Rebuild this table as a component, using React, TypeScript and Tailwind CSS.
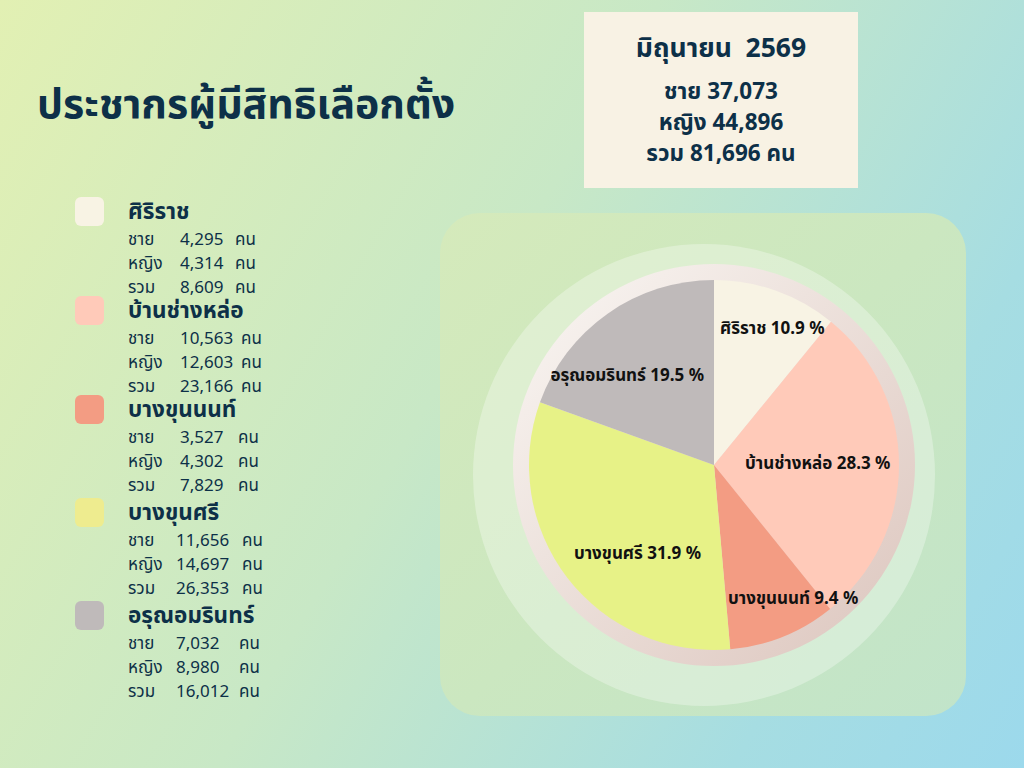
const districts = [
  {
    name: "ศิริราช",
    color: "#f8f3e4",
    pct: 10.9,
    rows: [
      ["ชาย", "4,295"],
      ["หญิง", "4,314"],
      ["รวม", "8,609"],
    ],
    gap: "mt-0",
    num: "w-[55px]",
    lead: "w-[52px]",
  },
  {
    name: "บ้านช่างหล่อ",
    color: "#ffcab9",
    pct: 28.3,
    rows: [
      ["ชาย", "10,563"],
      ["หญิง", "12,603"],
      ["รวม", "23,166"],
    ],
    gap: "mt-0",
    num: "w-[61px]",
    lead: "w-[52px]",
  },
  {
    name: "บางขุนนนท์",
    color: "#f39c83",
    pct: 9.4,
    rows: [
      ["ชาย", "3,527"],
      ["หญิง", "4,302"],
      ["รวม", "7,829"],
    ],
    gap: "mt-0",
    num: "w-[58px]",
    lead: "w-[52px]",
  },
  {
    name: "บางขุนศรี",
    color: "#eeec8f",
    pct: 31.9,
    rows: [
      ["ชาย", "11,656"],
      ["หญิง", "14,697"],
      ["รวม", "26,353"],
    ],
    gap: "mt-1",
    num: "w-[66px]",
    lead: "w-[48px]",
  },
  {
    name: "อรุณอมรินทร์",
    color: "#bfbaba",
    pct: 19.5,
    rows: [
      ["ชาย", "7,032"],
      ["หญิง", "8,980"],
      ["รวม", "16,012"],
    ],
    gap: "mt-1",
    num: "w-[63px]",
    lead: "w-[48px]",
  },
]

const pieColors = ["#f8f3e4", "#ffcab9", "#f39c83", "#e7f287", "#bfbaba"]

function Pie() {
  const cx = 274
  const cy = 252
  const r = 185
  let start = 0
  const slices = districts.map((d, i) => {
    const a0 = (start / 100) * Math.PI * 2
    start += d.pct
    const a1 = (start / 100) * Math.PI * 2
    const x0 = cx + r * Math.sin(a0)
    const y0 = cy - r * Math.cos(a0)
    const x1 = cx + r * Math.sin(a1)
    const y1 = cy - r * Math.cos(a1)
    const large = a1 - a0 > Math.PI ? 1 : 0
    return (
      <path
        key={d.name}
        d={`M${cx} ${cy} L${x0} ${y0} A${r} ${r} 0 ${large} 1 ${x1} ${y1} Z`}
        fill={pieColors[i]}
      />
    )
  })

  return (
    <svg width="526" height="503" viewBox="0 0 526 503" className="block">
      <defs>
        <linearGradient id="ring" x1="0" y1="0" x2="1" y2="1">
          <stop offset="0" stopColor="#faf7f4" />
          <stop offset="1" stopColor="#dcc5bd" />
        </linearGradient>
      </defs>
      <circle cx="264" cy="262" r="231" fill="#ffffff" fillOpacity="0.3" />
      <circle cx={cx} cy={cy} r="201" fill="url(#ring)" />
      {slices}
      <g
        fontFamily="'Noto Sans', 'Noto Sans Thai', sans-serif"
        fontWeight="700"
        fontSize="17"
        fill="#111111"
        dominantBaseline="central"
      >
        <text x="280" y="114">ศิริราช 10.9 %</text>
        <text x="305" y="249">บ้านช่างหล่อ 28.3 %</text>
        <text x="288" y="384">บางขุนนนท์ 9.4 %</text>
        <text x="261" y="339" textAnchor="end">บางขุนศรี 31.9 %</text>
        <text x="264" y="161" textAnchor="end">อรุณอมรินทร์ 19.5 %</text>
      </g>
    </svg>
  )
}

export default function App() {
  return (
    <div className="flex h-[768px] w-[1024px] overflow-hidden bg-[linear-gradient(120deg,#e2f0b3_0%,#c8e8c6_45%,#a6dde2_80%,#9cd9ec_100%)] font-['Noto_Sans','Noto_Sans_Thai',sans-serif] text-[#0d3048]">
      <div className="flex w-[440px] flex-col">
        <h1 className="mt-[76px] pl-[37px] text-[41px] leading-[52px] font-bold whitespace-nowrap">
          ประชากรผู้มีสิทธิเลือกตั้ง
        </h1>
        <div className="mt-[72px] flex flex-col pl-[75px]">
          {districts.map((d) => (
            <div key={d.name} className={d.gap}>
              <div className="flex h-[22px] items-center">
                <div
                  className="h-[29px] w-[29px] shrink-0 rounded-[6px]"
                  style={{ backgroundColor: d.color }}
                />
                <div className="ml-6 text-[22.5px] leading-[22px] font-bold">
                  {d.name}
                </div>
              </div>
              <div className="pt-[5px] pl-[53px] text-[17px] leading-6">
                {d.rows.map(([label, value]) => (
                  <div key={label} className="flex">
                    <span className={d.lead}>{label}</span>
                    <span className={d.num}>{value}</span>
                    <span>คน</span>
                  </div>
                ))}
              </div>
            </div>
          ))}
        </div>
      </div>

      <div className="flex flex-col">
        <div className="mt-3 ml-[144px] flex h-[176px] w-[274px] flex-col items-center bg-[#f8f2e4] pt-[16px] font-bold">
          <div className="text-[26.5px] leading-[38px]">
            มิถุนายน&nbsp;&nbsp;2569
          </div>
          <div className="mt-[9px] flex flex-col items-center text-[22.5px] leading-[31px]">
            <span>ชาย 37,073</span>
            <span>หญิง 44,896</span>
            <span>รวม 81,696 คน</span>
          </div>
        </div>
        <div className="mt-[25px] h-[503px] w-[526px] overflow-hidden rounded-[40px] bg-[linear-gradient(135deg,#d5eabb_0%,#cbe7c0_50%,#c1e4ca_100%)]">
          <Pie />
        </div>
      </div>
    </div>
  )
}
